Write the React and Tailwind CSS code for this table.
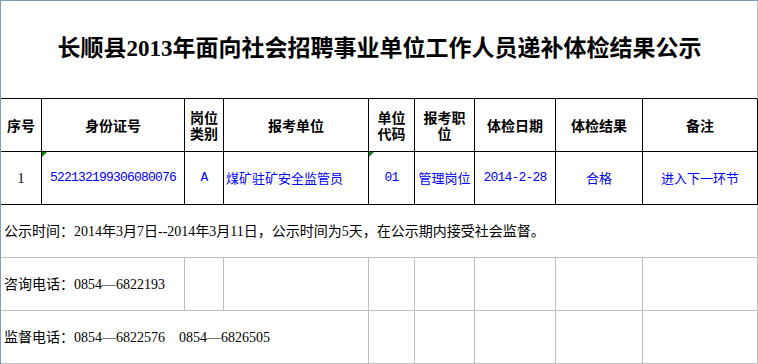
import React from 'react'

const cjk = "font-['Liberation_Serif','Noto_Sans_CJK_SC',serif]"
const mono = "font-['Liberation_Mono','Noto_Sans_CJK_SC',monospace] text-[13px] tracking-[-0.8px]"
const sans = "font-['Noto_Sans_CJK_SC',sans-serif] text-[13px]"

const headCell = `flex items-center justify-center text-center border-r border-b border-black px-1 text-[14px] leading-[16px] font-bold text-black font-['Noto_Sans_CJK_SC',sans-serif]`
const dataCell = 'relative flex items-center border-r border-b border-black text-[#0000ff]'
const greyCell = 'border-r border-b border-[#c0c0c0]'

const headers = ['序号', '身份证号', '岗位类别', '报考单位', '单位代码', '报考职位', '体检日期', '体检结果', '备注']

// excel 小绿角
const Marker = () => (
  <span className="absolute left-0 top-0 w-0 h-0 border-t-[5px] border-r-[5px] border-t-[#108010] border-r-transparent" />
)

export default function App() {
  return (
    <div className="w-[758px] h-[364px] bg-white border-l border-t border-[#7f9db9] grid grid-cols-[41px_143px_39px_145px_46px_60px_81px_87px_115px] grid-rows-[98px_53px_53px_53px_53px_53px]">
      {/* 标题 */}
      <div className="col-span-9 flex items-center justify-center border-b border-b-black border-r border-r-[#c0c0c0]">
        <h1 className="text-[23px] font-bold text-black font-['Liberation_Serif','Noto_Sans_CJK_SC',serif] pl-[1px]">
          长顺县2013年面向社会招聘事业单位工作人员递补体检结果公示
        </h1>
      </div>

      {/* 表头 */}
      {headers.map((h) => (
        <div key={h} className={headCell}>{h}</div>
      ))}

      {/* 数据行 */}
      <div className={`${dataCell} justify-center text-black text-[14px] ${cjk}`}>1</div>
      <div className={`${dataCell} justify-center ${mono}`}>
        <Marker />
        522132199306080076
      </div>
      <div className={`${dataCell} justify-center ${mono}`}>A</div>
      <div className={`${dataCell} pl-[2px] ${sans}`}>煤矿驻矿安全监管员</div>
      <div className={`${dataCell} justify-center ${mono}`}>
        <Marker />
        01
      </div>
      <div className={`${dataCell} justify-center ${sans}`}>管理岗位</div>
      <div className={`${dataCell} justify-center ${mono}`}>2014-2-28</div>
      <div className={`${dataCell} justify-center ${sans}`}>合格</div>
      <div className={`${dataCell} justify-center ${sans}`}>进入下一环节</div>

      {/* 公示说明 */}
      <div className={`col-span-9 flex items-center pl-[3px] text-[14px] text-black ${cjk} ${greyCell}`}>
        公示时间：2014年3月7日--2014年3月11日，公示时间为5天，在公示期内接受社会监督。
      </div>

      <div className={`col-span-2 flex items-center pl-[3px] text-[14px] text-black ${cjk} ${greyCell}`}>
        咨询电话：0854—6822193
      </div>
      <div className={greyCell} />
      <div className={greyCell} />
      <div className={greyCell} />
      <div className={greyCell} />
      <div className={greyCell} />
      <div className={greyCell} />
      <div className={greyCell} />

      <div className={`col-span-4 flex items-center pl-[3px] text-[14px] text-black whitespace-pre ${cjk} ${greyCell}`}>
        监督电话：0854—6822576　0854—6826505
      </div>
      <div className={greyCell} />
      <div className={greyCell} />
      <div className={greyCell} />
      <div className={greyCell} />
      <div className={greyCell} />
    </div>
  )
}
